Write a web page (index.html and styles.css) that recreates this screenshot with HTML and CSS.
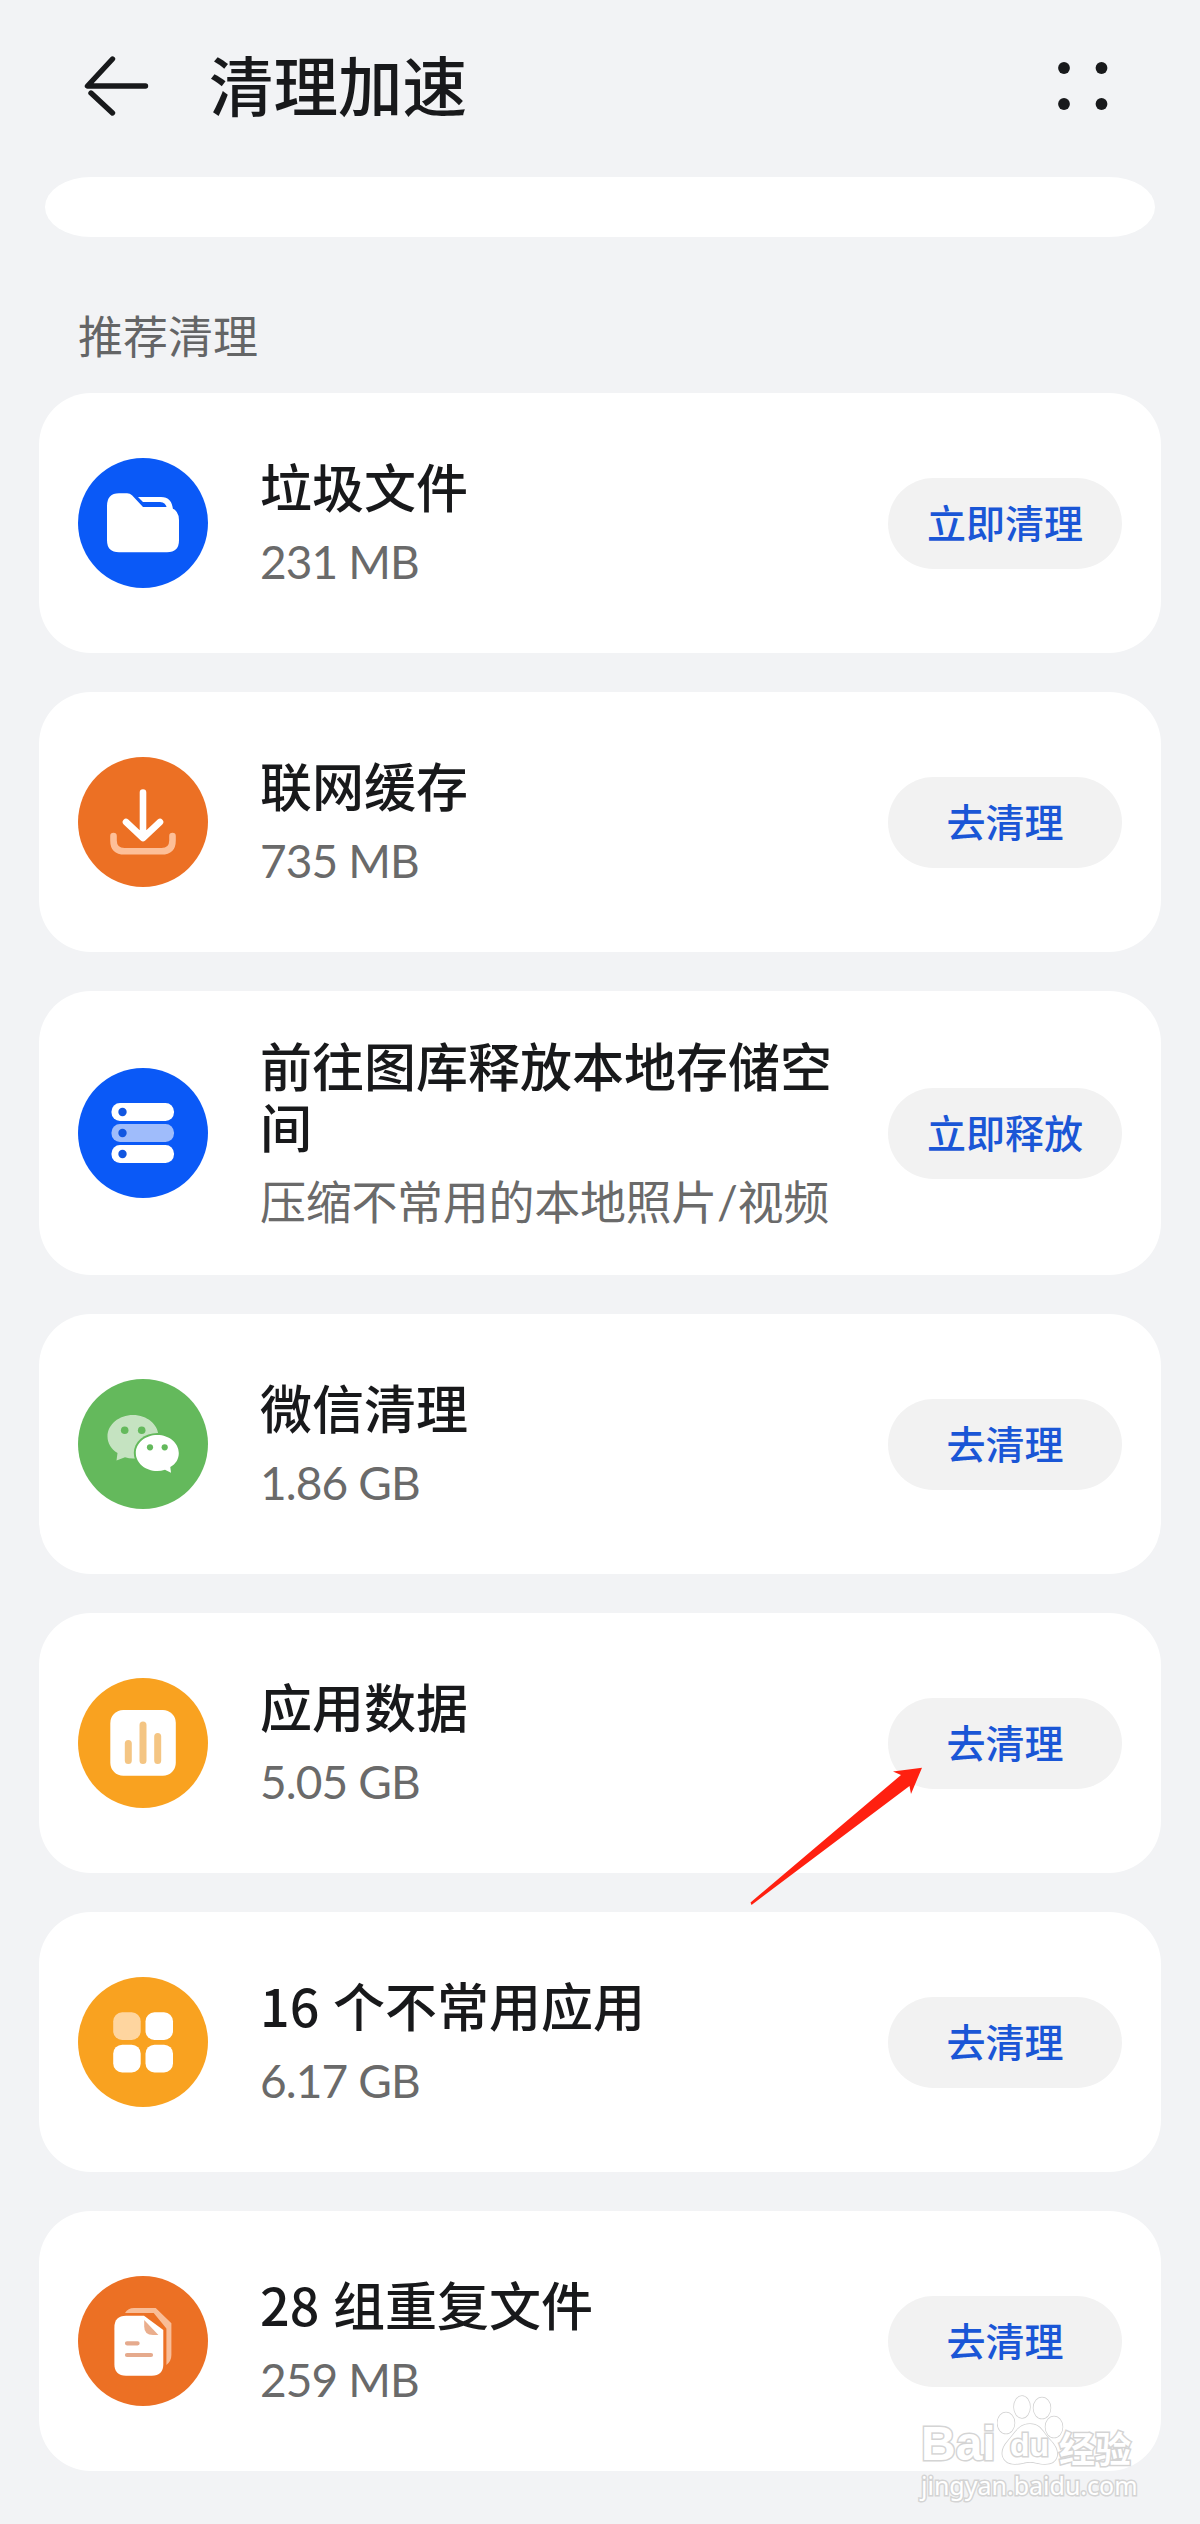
FILE: index.html
```html
<!DOCTYPE html>
<html lang="zh-CN">
<head>
<meta charset="utf-8">
<title>清理加速</title>
<link rel="stylesheet" href="styles.css">
</head>
<body>
<div class="screen">
  <header class="header">
    <svg class="back" viewBox="0 0 70 64" fill="none" stroke="#18191b" stroke-width="5.4" stroke-linecap="round" stroke-linejoin="round"><path d="M32.500 5 7.500 32H65.500M11 39 32.500 59"/></svg>
    <h1 class="title">清理加速</h1>
    <svg class="more" viewBox="0 0 52 50" fill="#18191b"><circle cx="7" cy="7" r="5.900"/><circle cx="44.500" cy="7" r="5.900"/><circle cx="7" cy="43" r="5.900"/><circle cx="44.500" cy="43" r="5.900"/></svg>
  </header>
  <div class="strip"></div>
  <h2 class="section">推荐清理</h2>
  <main class="list">
    <section class="card">
      <svg class="icon blue" viewBox="0 0 130 130" fill="#fff"><path d="M65 49H90q11 2 11 13v20.300q0 12-12 12H41q-12 0-12-12V48q0-12.700 12-12.700h8q3 0 5 2z"/><path d="M60 39H83q11 0 12 13l-6-1q-1-7-7-7H65z"/></svg>
      <div class="info"><h3 class="name">垃圾文件</h3><p class="sub size">231 MB</p></div>
      <button class="action">立即清理</button>
    </section>
    <section class="card">
      <svg class="icon orange" viewBox="0 0 130 130" fill="none" stroke="#fff" stroke-width="6.600" stroke-linecap="round" stroke-linejoin="round"><path d="M35.500 79v4.500q0 10.800 11 10.800h37q11 0 11-10.800V79" stroke="#fdbf98"/><path d="M65 35.500V80M48 65l17 16 17-16"/></svg>
      <div class="info"><h3 class="name">联网缓存</h3><p class="sub size">735 MB</p></div>
      <button class="action">去清理</button>
    </section>
    <section class="card tall">
      <svg class="icon blue" viewBox="0 0 130 130" fill="#fff"><rect x="33.500" y="35" width="62.500" height="18" rx="8.500"/><rect x="33.500" y="56" width="62.500" height="18" rx="8.500" fill="#9fbcfb"/><rect x="33.500" y="77" width="62.500" height="18" rx="8.500"/><g fill="#1156e0"><circle cx="44.500" cy="44" r="4.200"/><circle cx="44.500" cy="65" r="4.200"/><circle cx="44.500" cy="86" r="4.200"/></g></svg>
      <div class="info"><h3 class="name">前往图库释放本地存储空间</h3><p class="sub">压缩不常用的本地照片/视频</p></div>
      <button class="action">立即释放</button>
    </section>
    <section class="card">
      <svg class="icon green" viewBox="0 0 130 130" fill="#fff"><path d="M55 36c14 0 25.500 9.500 25.500 21.500S69 79.500 55 79.500q-4 0-8-1.200l-8.500 3.200 1-7.500C33 70 29.500 64 29.500 57.500 29.500 45.500 41 36 55 36z" fill="#c5e3c1"/><g fill="#64b95c"><circle cx="46.700" cy="51.300" r="3.800"/><circle cx="63.700" cy="51.300" r="3.800"/><ellipse cx="79.300" cy="74" rx="23.500" ry="20"/></g><path d="M79.300 56c12 0 21.500 8 21.500 18 0 6-3 11-8.500 14l.7 5.700-6-3q-4 1.300-7.700 1.300c-12 0-21.500-8-21.500-18s9.500-18 21.500-18z"/><g fill="#64b95c"><circle cx="72" cy="68.300" r="3.100"/><circle cx="86.700" cy="68.300" r="3.100"/></g></svg>
      <div class="info"><h3 class="name">微信清理</h3><p class="sub size">1.86 GB</p></div>
      <button class="action">去清理</button>
    </section>
    <section class="card">
      <svg class="icon amber" viewBox="0 0 130 130" fill="#fff"><rect x="32.300" y="32" width="65.500" height="65.800" rx="13"/><path d="M50.300 65.500v17M65 47v35.500M79.700 58.500v24" stroke="#f4c583" stroke-width="7" stroke-linecap="round"/></svg>
      <div class="info"><h3 class="name">应用数据</h3><p class="sub size">5.05 GB</p></div>
      <button class="action">去清理</button>
    </section>
    <section class="card">
      <svg class="icon amber" viewBox="0 0 130 130" fill="#fff"><rect x="35.200" y="35.300" width="27.500" height="27.700" rx="9" fill="#fed59f"/><rect x="67.500" y="35.300" width="27.500" height="27.700" rx="9"/><rect x="35.200" y="67.700" width="27.500" height="27.700" rx="9"/><rect x="67.500" y="67.700" width="27.500" height="27.700" rx="9"/></svg>
      <div class="info"><h3 class="name">16 个不常用应用</h3><p class="sub size">6.17 GB</p></div>
      <button class="action">去清理</button>
    </section>
    <section class="card">
      <svg class="icon orange" viewBox="0 0 130 130" fill="#fff"><path d="M47 37q3-5 9-5h21.700L93.400 47.300V79q0 6-5 10V52.500L75.700 37z" fill="#f9bd97"/><path d="M48 39.700h18L85.300 54v34q0 11.700-11.500 11.700H48q-11.600 0-11.600-11.700V51.400Q36.400 39.700 48 39.700z"/><path d="M66.200 44 80.400 59H75q-8.800 0-8.800-8.500z" fill="#eaae8d"/><path d="M49 67.300h10.600M49 79h24" stroke="#e5aa8d" stroke-width="4.200" stroke-linecap="round"/></svg>
      <div class="info"><h3 class="name">28 组重复文件</h3><p class="sub size">259 MB</p></div>
      <button class="action">去清理</button>
    </section>
  </main>
  <svg class="pointer" viewBox="0 0 174 140" fill="#ff2010"><path d="M173 1.700 144 5.500 152 9 1.500 136.500 2.500 139 160.500 20 162 28z"/></svg>
  <div class="watermark">
    <div class="brand">
      <span class="bai">Bai</span>
      <span class="paw">
        <svg viewBox="0 0 68 72" fill="#fff" stroke="#d2d2d2" stroke-width="1.500"><ellipse cx="9" cy="30" rx="8.500" ry="10.500"/><ellipse cx="25" cy="14" rx="8" ry="11"/><ellipse cx="45" cy="15" rx="8.500" ry="10.500"/><ellipse cx="57" cy="34" rx="8.500" ry="10.500"/><path d="M33 31c11 0 13 9 20 16 12 12 8 24-5 24-7 0-9-2-15-2s-8 2-15 2c-13 0-17-12-7-23 7-8 11-17 22-17z"/></svg>
        <span class="du">du</span>
      </span>
      <span class="jingyan">经验</span>
    </div>
    <div class="url">jingyan.baidu.com</div>
  </div>
</div>
</body>
</html>
```
FILE: styles.css
```css
* { box-sizing: border-box; margin: 0; padding: 0; }
body { background: #f2f3f5; font-family: "Noto Sans CJK SC", sans-serif; color: #18191b; }
.screen { position: relative; width: 1200px; height: 2524px; overflow: hidden; }
.header { display: flex; align-items: center; height: 177px; padding: 0 91px 6px 80px; }
.back { width: 70px; height: 64px; flex: none; }
.title { flex: 1; margin-left: 59px; padding-bottom: 6px; font-size: 64.5px; line-height: 84px; font-weight: 500; }
.more { width: 52px; height: 50px; flex: none; }
.strip { height: 60px; margin: 0 45px; background: #fff; border-radius: 46px / 30px; }
.section { height: 156px; padding: 65px 0 0 78px; font-size: 45px; line-height: 66px; font-weight: 400; color: #646566; }
.list { display: flex; flex-direction: column; gap: 39px; padding: 0 39px; }
.card { display: flex; align-items: center; height: 260px; padding: 0 39px; background: #fff; border-radius: 52px; }
.tall { height: 284px; }
.icon { width: 130px; height: 130px; flex: none; border-radius: 50%; }
.blue { background: #0a59f7; }
.orange { background: #ec7024; }
.green { background: #64b95c; }
.amber { background: #f9a220; }
.info { width: 575px; margin-left: 52px; padding-bottom: 3px; }
.name { font-size: 52px; line-height: 61px; font-weight: 500; word-spacing: 2px; }
.sub { margin-top: 19px; font-family: Lato, "Noto Sans CJK SC", sans-serif; font-size: 46px; line-height: 54px; letter-spacing: -.3px; color: #6a6a6a; white-space: nowrap; }
.size { letter-spacing: -.9px; }
.action { width: 234px; height: 91px; margin-left: auto; padding-bottom: 4px; border: 0; border-radius: 46px; background: #f2f2f2; color: #1a56d6; font: 500 39px/87px "Noto Sans CJK SC", sans-serif; }
.pointer { position: absolute; left: 749px; top: 1766px; width: 174px; height: 140px; }
.watermark { position: absolute; left: 921px; top: 2394px; width: 220px; color: #fff; -webkit-text-stroke: 3px #d4d4d4; paint-order: stroke fill; }
.brand { display: flex; align-items: flex-end; height: 71px; }
.bai { width: 76px; font: 700 48px/42px "Liberation Sans", sans-serif; }
.paw { position: relative; width: 62px; height: 72px; }
.paw svg { display: block; width: 68px; height: 72px; }
.du { position: absolute; left: 13px; top: 36px; font: 700 32px/32px "Liberation Sans", sans-serif; }
.jingyan { font-size: 36px; line-height: 36px; font-weight: 700; }
.url { margin-top: 5px; font: 400 25px/30px "Noto Sans", sans-serif; white-space: nowrap; }
```
